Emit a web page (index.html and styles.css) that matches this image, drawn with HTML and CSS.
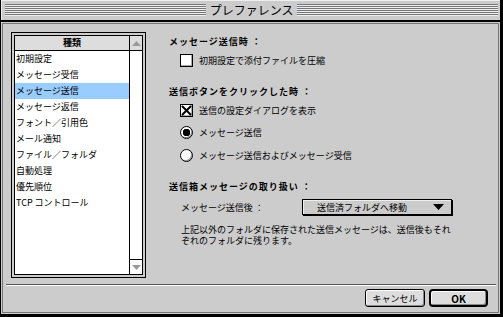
FILE: index.html
```html
<!DOCTYPE html>
<html lang="ja">
<head>
    <meta charset="UTF-8">
    <meta name="viewport" content="width=device-width, initial-scale=1.0">
    <title>プレファレンス</title>
    <link rel="stylesheet" href="styles.css">
</head>
<body>
    <div class="window">
        <div class="titlebar">
            <div class="stripes"></div>
            <div class="title">プレファレンス</div>
            <div class="stripes"></div>
        </div>
        <div class="content">
            <div class="main">
                <!-- Category list -->
                <div class="list-frame">
                    <div class="list">
                        <div class="list-main">
                            <div class="list-head">種類</div>
                            <div class="list-row">初期設定</div>
                            <div class="list-row">メッセージ受信</div>
                            <div class="list-row selected">メッセージ送信</div>
                            <div class="list-row">メッセージ返信</div>
                            <div class="list-row">フォント／引用色</div>
                            <div class="list-row">メール通知</div>
                            <div class="list-row">ファイル／フォルダ</div>
                            <div class="list-row">自動処理</div>
                            <div class="list-row">優先順位</div>
                            <div class="list-row">TCP コントロール</div>
                        </div>
                        <div class="scroll">
                            <div class="scroll-up">
                                <svg width="9" height="5" viewBox="0 0 9 5"><polygon points="0,5 9,5 4.5,0" fill="#999"/></svg>
                            </div>
                            <div class="scroll-track"></div>
                            <div class="scroll-down">
                                <svg width="9" height="5" viewBox="0 0 9 5"><polygon points="0,0 9,0 4.5,5" fill="#999"/></svg>
                            </div>
                        </div>
                    </div>
                </div>

                <!-- Settings for the selected category -->
                <div class="panel">
                    <div class="heading">メッセージ送信時 ：</div>
                    <div class="option first">
                        <span class="checkbox"></span>
                        <span>初期設定で添付ファイルを圧縮</span>
                    </div>

                    <div class="heading section">送信ボタンをクリックした時 ：</div>
                    <div class="option first">
                        <span class="checkbox">
                            <svg width="11" height="11" viewBox="0 0 11 11"><path d="M1 1 L10 10 M10 1 L1 10" stroke="#000" stroke-width="2"/></svg>
                        </span>
                        <span>送信の設定ダイアログを表示</span>
                    </div>
                    <div class="option radio-1">
                        <span class="radio on"></span>
                        <span>メッセージ送信</span>
                    </div>
                    <div class="option radio-2">
                        <span class="radio"></span>
                        <span>メッセージ送信およびメッセージ受信</span>
                    </div>

                    <div class="heading section">送信箱メッセージの取り扱い ：</div>
                    <div class="popup-row">
                        <span class="popup-label">メッセージ送信後 ：</span>
                        <div class="popup">
                            <span>送信済フォルダへ移動</span>
                            <svg width="11" height="6" viewBox="0 0 11 6"><polygon points="0,0 11,0 5.5,6" fill="#000"/></svg>
                        </div>
                    </div>
                    <p class="note">上記以外のフォルダに保存された送信メッセージは、送信後もそれぞれのフォルダに残ります。</p>
                </div>
            </div>

            <div class="separator"></div>

            <div class="buttons">
                <button class="btn btn-cancel">キャンセル</button>
                <button class="btn btn-default">OK</button>
            </div>
        </div>
    </div>
</body>
</html>
```

FILE: styles.css
```css
* {
    box-sizing: border-box;
}
body {
    margin: 0;
    font-family: "Noto Sans CJK JP", sans-serif;
    font-size: 9px;
    color: #000;
    background-color: #fff;
}
.window {
    width: 503px;
    height: 317px;
    background-color: #ccc;
    border-left: 1px solid #000;
    border-right: 3px solid #000;
    border-bottom: 3px solid #000;
    display: flex;
    flex-direction: column;
}

/* Title bar */
.titlebar {
    height: 22px;
    flex-shrink: 0;
    border-bottom: 2px solid #000;
    display: flex;
    align-items: flex-start;
    padding: 4px 2px 0 4px;
    box-shadow: inset 1px 1px 0 #eee;
}
.stripes {
    flex: 1;
    height: 12px;
    background: repeating-linear-gradient(to bottom, #777 0 1px, #eee 1px 2px);
}
.title {
    font-size: 12px;
    line-height: 12px;
    padding: 0 4px;
}

/* Content */
.content {
    flex: 1;
    margin: 1px;
    border: 1px solid #777;
    display: flex;
    flex-direction: column;
}
.main {
    display: flex;
    height: 254px;
    padding: 8px 0 0 8px;
}

/* List */
.list-frame {
    width: 135px;
    height: 246px;
    border: 1px solid #000;
    padding: 2px;
}
.list {
    height: 100%;
    border: 1px solid #000;
    background-color: #fff;
    display: flex;
}
.list-main {
    flex: 1;
}
.list-head {
    height: 15px;
    line-height: 14px;
    border-bottom: 1px solid #000;
    background-color: #ddd;
    text-align: center;
    font-weight: 700;
}
.list-row {
    height: 16px;
    line-height: 16px;
    padding-left: 1px;
    white-space: nowrap;
}
.list-row.selected {
    background-color: #99ccff;
}
.scroll {
    width: 13px;
    border-left: 1px solid #000;
    display: flex;
    flex-direction: column;
}
.scroll-up {
    height: 15px;
    border-bottom: 1px solid #000;
    background-color: #ddd;
    display: flex;
    align-items: center;
    justify-content: center;
}
.scroll-track {
    flex: 1;
}
.scroll-down {
    height: 15px;
    border-top: 1px solid #000;
    display: flex;
    align-items: center;
    justify-content: center;
}

/* Settings panel */
.panel {
    margin-left: 23px;
    padding-top: 3px;
    display: flex;
    flex-direction: column;
}
.heading {
    height: 14px;
    line-height: 14px;
    font-weight: 700;
    letter-spacing: 1px;
    white-space: nowrap;
}
.heading.section {
    margin-top: 17px;
}
.option {
    height: 16px;
    display: flex;
    align-items: center;
    gap: 6px;
    padding-left: 11px;
    white-space: nowrap;
}
.option.first {
    margin-top: 3px;
}
.option.radio-1 {
    margin-top: 6px;
}
.option.radio-2 {
    margin-top: 7px;
}
.checkbox {
    width: 13px;
    height: 13px;
    border: 1px solid #000;
    background-color: #fff;
    box-shadow: inset -1px -1px 0 #aaa;
    display: flex;
    align-items: center;
    justify-content: center;
}
.radio {
    width: 13px;
    height: 13px;
    border: 1px solid #000;
    border-radius: 50%;
    background-color: #fff;
    box-shadow: inset -1px -1px 0 #999;
}
.radio.on {
    background: radial-gradient(circle, #000 0 3.5px, #fff 4px);
}
.popup-row {
    margin-top: 5px;
    height: 16px;
    display: flex;
    align-items: center;
    padding-left: 12px;
    white-space: nowrap;
}
.popup-label {
    width: 121px;
}
.popup {
    width: 150px;
    height: 16px;
    border: 1px solid #000;
    background-color: #ccc;
    box-shadow: 1px 1px 0 #000, inset 1px 1px 0 #eee;
    display: flex;
    align-items: center;
    padding: 0 7px 0 14px;
}
.popup svg {
    margin-left: auto;
}
.note {
    margin: 9px 0 0;
    padding-left: 12px;
    width: 284px;
    line-height: 11px;
}

/* Bottom */
.separator {
    height: 2px;
    margin: 6px 2px 0 3px;
    border-top: 1px solid #555;
    border-bottom: 1px solid #fff;
}
.buttons {
    margin-top: 3px;
    display: flex;
    justify-content: flex-end;
    gap: 4px;
    padding-right: 10px;
}
.btn {
    font-family: inherit;
    font-size: 9px;
    color: #000;
    height: 18px;
    padding: 0;
    border: 1px solid #000;
    border-radius: 3px;
    background-color: #ddd;
    box-shadow: inset 1px 1px 0 #fff, inset -1px -1px 0 #888;
}
.btn-cancel {
    width: 60px;
}
.btn-default {
    width: 59px;
    border-width: 2px;
    border-radius: 4px;
    font-size: 10px;
    font-weight: 700;
}
```
